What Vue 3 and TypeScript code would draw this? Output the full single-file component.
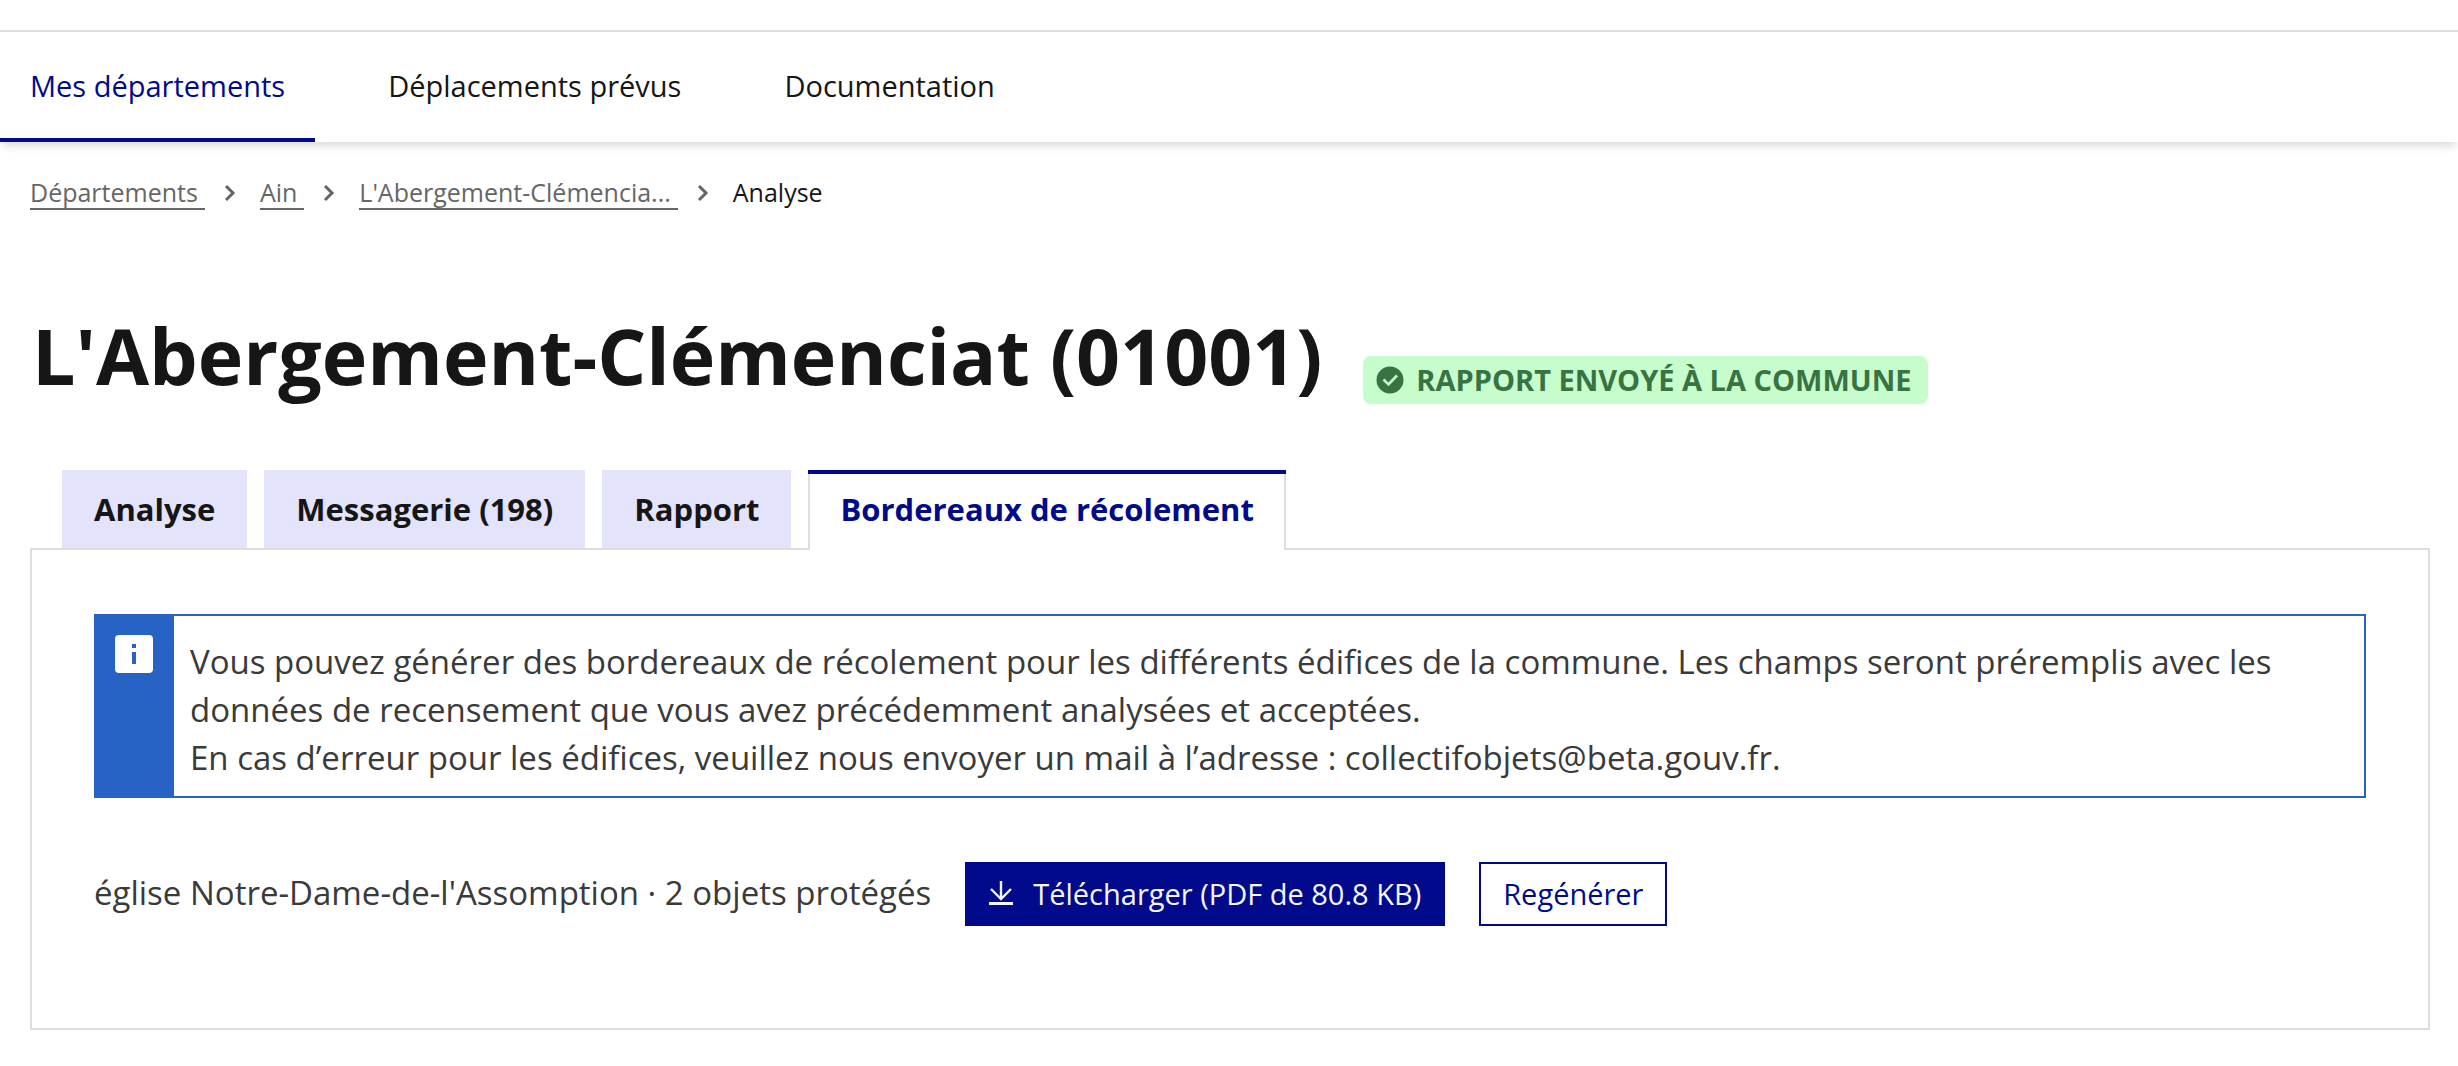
<script setup lang="ts">
interface NavItem { label: string; current: boolean }
interface Tab { label: string; active: boolean }

const navItems: NavItem[] = [
  { label: 'Mes départements', current: true },
  { label: 'Déplacements prévus', current: false },
  { label: 'Documentation', current: false },
]

const ancestors: string[] = ['Départements', 'Ain', "L'Abergement-Clémencia..."]

const tabs: Tab[] = [
  { label: 'Analyse', active: false },
  { label: 'Messagerie (198)', active: false },
  { label: 'Rapport', active: false },
  { label: 'Bordereaux de récolement', active: true },
]
</script>

<template>
  <div class="page">
    <header class="header">
      <nav class="nav" aria-label="Menu principal">
        <a
          v-for="item in navItems"
          :key="item.label"
          href="#"
          class="nav-link"
          :class="{ current: item.current }"
          :aria-current="item.current ? 'page' : undefined"
        >{{ item.label }}</a>
      </nav>
    </header>

    <main class="content">
      <nav aria-label="Fil d'Ariane">
        <ol class="breadcrumb">
          <li v-for="label in ancestors" :key="label" class="crumb">
            <a href="#" class="crumb-link">{{ label }}</a>
            <svg class="chevron" viewBox="0 0 32 32" aria-hidden="true">
              <path d="M9 10l7 7-7 7" fill="none" stroke="currentColor" stroke-width="3" />
            </svg>
          </li>
          <li class="crumb" aria-current="page">Analyse</li>
        </ol>
      </nav>

      <div class="heading">
        <h1 class="title">L'Abergement-Clémenciat (01001)</h1>
        <p class="badge">
          <svg class="badge-icon" viewBox="0 0 28 28" aria-hidden="true">
            <circle cx="14" cy="14" r="13.5" fill="currentColor" />
            <path d="M7.5 13.5l5 5 8.5-9" fill="none" stroke="#c7fccd" stroke-width="2.6" />
          </svg>
          <span>RAPPORT ENVOYÉ À LA COMMUNE</span>
        </p>
      </div>

      <nav class="tabs" aria-label="Onglets de la commune">
        <a
          v-for="tab in tabs"
          :key="tab.label"
          href="#"
          class="tab"
          :class="{ active: tab.active }"
          :aria-current="tab.active ? 'page' : undefined"
        >{{ tab.label }}</a>
      </nav>

      <section class="panel">
        <div class="notice">
          <div class="notice-band">
            <svg class="notice-icon" viewBox="0 0 38 38" aria-hidden="true">
              <rect width="38" height="38" rx="4" fill="#fff" />
              <path d="M17 9h4v4h-4zM17 17h4v12h-4z" fill="#2663c4" />
            </svg>
          </div>
          <p class="notice-text">
            Vous pouvez générer des bordereaux de récolement pour les différents édifices de la commune. Les champs seront préremplis avec les données de recensement que vous avez précédemment analysées et acceptées.<br />
            En cas d’erreur pour les édifices, veuillez nous envoyer un mail à l’adresse : collectifobjets@beta.gouv.fr.
          </p>
        </div>

        <div class="edifice">
          <p class="edifice-name">église Notre-Dame-de-l'Assomption · 2 objets protégés</p>
          <a href="#" class="btn btn-primary"><svg class="btn-icon" viewBox="0 0 24 24" aria-hidden="true">
            <path d="M12 0v18M2 8l10 10 10-10" fill="none" stroke="currentColor" stroke-width="2.4" />
            <path d="M0 21h24v3H0z" fill="currentColor" />
          </svg>Télécharger (PDF de 80.8 KB)</a>
          <button type="button" class="btn btn-secondary">Regénérer</button>
        </div>
      </section>
    </main>
  </div>
</template>

<style>
body {
  background: #fff;
}
</style>

<style scoped>
.page {
  padding-top: 30px;
  font-family: "Open Sans", "Noto Sans", sans-serif;
  color: #161616;
}

h1,
p,
ol {
  margin: 0;
  padding: 0;
}

a {
  color: inherit;
  text-decoration: none;
}

.header {
  border-top: 2px solid #ddd;
  box-shadow: 0 6px 8px -2px rgba(0, 0, 18, 0.14);
}

.nav {
  display: flex;
  gap: 43px;
}

.nav-link {
  padding: 2px 30px 0;
  border-bottom: 4px solid transparent;
  font-size: 29px;
  line-height: 104px;
}

.nav-link.current {
  color: #000a8b;
  border-bottom-color: #000a8b;
}

.content {
  padding: 34px 28px 36px 30px;
}

.breadcrumb {
  display: flex;
  align-items: flex-start;
  list-style: none;
  font-size: 25px;
  line-height: 32px;
}

.crumb {
  display: flex;
  align-items: flex-start;
}

.crumb-link {
  padding-right: 7px;
  border-bottom: 2px solid #666;
  color: #666;
}

.chevron {
  width: 32px;
  height: 32px;
  margin: 0 11px 0 12px;
  color: #666;
}

.heading {
  display: flex;
  flex-wrap: wrap;
  align-items: flex-end;
  gap: 41px;
  margin-top: 98px;
}

.title {
  padding-left: 2px;
  font-size: 77px;
  font-weight: 700;
  line-height: 96px;
}

.badge {
  display: flex;
  align-items: center;
  gap: 12px;
  padding: 0 16px 0 13px;
  border-radius: 8px;
  background: #c7fccd;
  color: #387342;
  font-size: 29px;
  font-weight: 700;
  line-height: 48px;
}

.badge-icon {
  width: 28px;
  height: 28px;
}

.tabs {
  display: flex;
  align-items: flex-start;
  gap: 17px;
  margin: 66px 32px -2px;
}

.tab {
  padding: 0 32px;
  background: #e3e3fb;
  font-size: 31px;
  font-weight: 700;
  line-height: 78px;
}

.tab.active {
  position: relative;
  padding-bottom: 2px;
  background: #fff;
  box-shadow: inset 0 4px #000a8b, inset 2px 0 #ddd, inset -2px 0 #ddd;
  color: #000a8b;
}

.panel {
  padding: 64px 62px 102px;
  border: 2px solid #ddd;
  color: #3a3a3a;
  font-size: 33px;
  line-height: 48px;
}

.notice {
  display: flex;
  border: 2px solid #2663c4;
}

.notice-band {
  flex: none;
  width: 38px;
  padding: 19px 21px 0 19px;
  background: #2663c4;
}

.notice-icon {
  display: block;
  width: 38px;
  height: 38px;
}

.notice-text {
  padding: 22px 32px 14px 16px;
}

.edifice {
  display: flex;
  flex-wrap: wrap;
  align-items: baseline;
  gap: 34px;
  margin-top: 64px;
}

.btn {
  padding: 0 24px;
  border: 0;
  font-family: inherit;
  font-size: 29px;
  font-weight: 500;
  line-height: 64px;
  white-space: nowrap;
}

.btn-primary {
  background: #000a8b;
  color: #f5f5fe;
}

.btn-secondary {
  background: #fff;
  box-shadow: inset 0 0 0 2px #000a8b;
  color: #000a8b;
}

.btn-icon {
  width: 24px;
  height: 24px;
  margin-right: 20px;
}
</style>
